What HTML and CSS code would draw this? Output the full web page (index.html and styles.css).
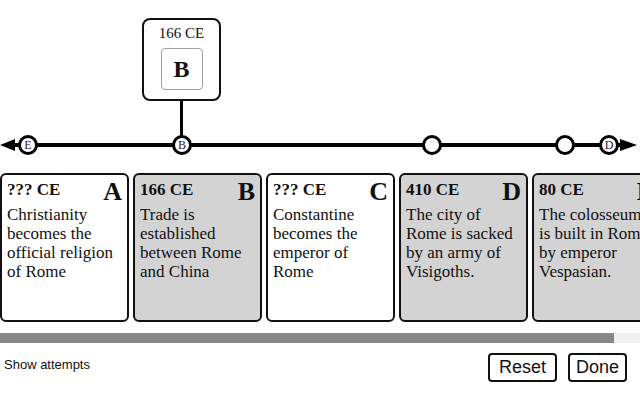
FILE: index.html
```html
<!DOCTYPE html>
<html lang="en">
<head>
    <meta charset="UTF-8">
    <meta name="viewport" content="width=device-width, initial-scale=1.0">
    <title>Timeline Sort</title>
    <link rel="stylesheet" href="styles.css">
</head>
<body>
    <div class="timeline">
        <svg class="axis" width="640" height="16" viewBox="0 0 640 16">
            <rect x="12" y="6" width="610" height="4" fill="#000"/>
            <polygon points="0,8 15,2 15,14" fill="#000"/>
            <polygon points="637,8 620,2 620,14" fill="#000"/>
        </svg>

        <div class="popup">
            <div class="popup-date">166 CE</div>
            <div class="popup-slot">B</div>
        </div>
        <div class="stem"></div>

        <div class="marker" style="left: 18px;">E</div>
        <div class="marker" style="left: 172px;">B</div>
        <div class="marker" style="left: 422px;"></div>
        <div class="marker" style="left: 555px;"></div>
        <div class="marker" style="left: 599px;">D</div>
    </div>

    <div class="cards">
        <div class="card">
            <div class="card-head">
                <span class="date">??? CE</span>
                <span class="letter">A</span>
            </div>
            <p>Christianity becomes the official religion of Rome</p>
        </div>
        <div class="card placed">
            <div class="card-head">
                <span class="date">166 CE</span>
                <span class="letter">B</span>
            </div>
            <p>Trade is established between Rome and China</p>
        </div>
        <div class="card">
            <div class="card-head">
                <span class="date">??? CE</span>
                <span class="letter">C</span>
            </div>
            <p>Constantine becomes the emperor of Rome</p>
        </div>
        <div class="card placed">
            <div class="card-head">
                <span class="date">410 CE</span>
                <span class="letter">D</span>
            </div>
            <p>The city of Rome is sacked by an army of Visigoths.</p>
        </div>
        <div class="card placed">
            <div class="card-head">
                <span class="date">80 CE</span>
                <span class="letter">E</span>
            </div>
            <p>The colosseum is built in Rome by emperor Vespasian.</p>
        </div>
    </div>
    <div class="scrollbar"><div class="thumb"></div></div>

    <div class="footer">
        <span class="attempts">Show attempts</span>
        <div class="buttons">
            <button class="reset">Reset</button>
            <button class="done">Done</button>
        </div>
    </div>
</body>
</html>
```

FILE: styles.css
```css
body {
    margin: 0;
    font-family: "Liberation Serif", "Times New Roman", serif;
    color: #111;
    background: #fff;
    width: 640px;
    overflow: hidden;
}
.timeline {
    position: relative;
    height: 173px;
}
.axis {
    position: absolute;
    left: 0;
    top: 137px;
}
.popup {
    position: absolute;
    left: 142px;
    top: 18px;
    width: 75px;
    height: 79px;
    border: 2px solid #111;
    border-radius: 8px;
    background: #fff;
    text-align: center;
}
.popup-date {
    font-size: 15px;
    line-height: 17px;
    padding-top: 5px;
}
.popup-slot {
    width: 40px;
    height: 40px;
    margin: 6px auto 0;
    border: 1px solid #a0a0a0;
    border-radius: 4px;
    font-size: 24px;
    font-weight: bold;
    line-height: 40px;
}
.stem {
    position: absolute;
    left: 180px;
    top: 100px;
    width: 3px;
    height: 38px;
    background: #000;
}
.marker {
    position: absolute;
    top: 135px;
    width: 14px;
    height: 14px;
    border: 3px solid #000;
    border-radius: 50%;
    background: #fff;
    font-size: 12px;
    line-height: 15px;
    text-align: center;
    color: #222;
}
.cards {
    display: flex;
    gap: 4px;
    overflow: hidden;
    padding-bottom: 11px;
}
.card {
    box-sizing: border-box;
    flex: 0 0 129px;
    height: 149px;
    border: 2px solid #111;
    border-radius: 6px;
    padding: 5px;
    background: #fff;
}
.card.placed {
    background-color: #d3d3d3;
}
.card-head {
    display: flex;
    justify-content: space-between;
    align-items: flex-start;
    height: 25px;
}
.date {
    font-size: 17px;
    font-weight: bold;
    line-height: 19px;
}
.letter {
    font-size: 26px;
    font-weight: bold;
    line-height: 24px;
}
.card p {
    margin: 0;
    font-size: 17px;
    line-height: 19px;
}
.scrollbar {
    height: 10px;
    background: #f1f1f1;
}
.thumb {
    width: 614px;
    height: 10px;
    background: #888;
}
.footer {
    display: flex;
    justify-content: space-between;
    align-items: flex-start;
    padding: 10px 13px 0 4px;
}
.attempts {
    font-family: "Liberation Sans", Arial, sans-serif;
    font-size: 13px;
    line-height: 15px;
    padding-top: 4px;
}
.buttons {
    display: flex;
    gap: 11px;
}
button {
    font-family: "Liberation Sans", Arial, sans-serif;
    font-size: 18px;
    height: 29px;
    background: #fff;
    color: #111;
    border: 2px solid #111;
    border-radius: 4px;
}
.reset { width: 69px; padding: 0; }
.done { width: 59px; padding: 0; }
```
